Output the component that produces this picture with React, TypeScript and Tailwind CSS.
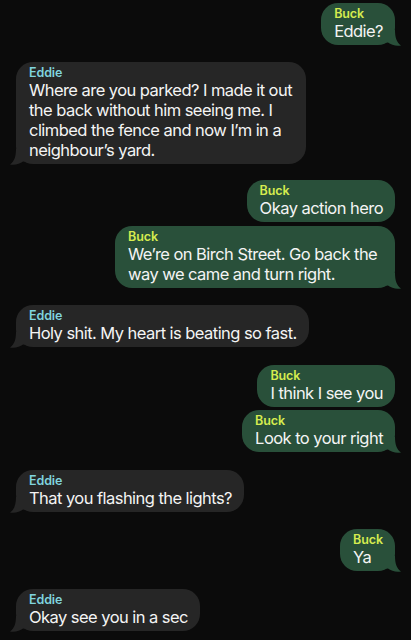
import React from "react";

type Msg = {
  from: "Buck" | "Eddie";
  text: string;
  width?: string;
};

const messages: Msg[] = [
  { from: "Buck", text: "Eddie?" },
  {
    from: "Eddie",
    text: "Where are you parked? I made it out the back without him seeing me. I climbed the fence and now I\u2019m in a neighbour\u2019s yard.",
    width: "w-[290px]",
  },
  { from: "Buck", text: "Okay action hero" },
  {
    from: "Buck",
    text: "We\u2019re on Birch Street. Go back the way we came and turn right.",
    width: "w-[280px]",
  },
  { from: "Eddie", text: "Holy shit. My heart is beating so fast." },
  { from: "Buck", text: "I think I see you" },
  { from: "Buck", text: "Look to your right" },
  { from: "Eddie", text: "That you flashing the lights?" },
  { from: "Buck", text: "Ya" },
  { from: "Eddie", text: "Okay see you in a sec" },
];

function Tail({ side, color }: { side: "left" | "right"; color: string }) {
  return (
    <svg
      width="16"
      height="16"
      viewBox="0 0 16 16"
      className={
        side === "right"
          ? "absolute -right-[6px] -bottom-[1px]"
          : "absolute -left-[6px] -bottom-[1px] -scale-x-100"
      }
    >
      <path d="M0 0 H10 C10 7 11.5 12.5 16 15.5 C11 16.3 6 15 3 12.5 H0 Z" fill={color} />
    </svg>
  );
}

function Bubble({ msg, last }: { msg: Msg; last: boolean }) {
  const mine = msg.from === "Buck";
  const color = mine ? "#29503a" : "#262626";
  return (
    <div
      className={`relative rounded-[17px] pl-[13px] pr-3 pt-[4px] pb-[4px] ${
        mine ? "self-end bg-[#29503a]" : "self-start bg-[#262626]"
      } ${msg.width ?? "w-fit max-w-[300px]"}`}
    >
      <div
        className={`text-[12.5px] leading-[14px] font-semibold tracking-[-0.1px] ${
          mine ? "text-[#d6ec4f]" : "text-[#80d4de]"
        }`}
      >
        {msg.from}
      </div>
      <div className="text-[16.5px] leading-[20px] tracking-[-0.55px] text-[#f4f4f4]">
        {msg.text}
      </div>
      {last && <Tail side={mine ? "right" : "left"} color={color} />}
    </div>
  );
}

export default function App() {
  return (
    <div
      className="min-h-[640px] w-[411px] bg-[#0b0b0b] px-4 pt-[3px] flex flex-col"
      style={{ fontFamily: "Inter, 'Noto Sans', sans-serif" }}
    >
      {messages.map((m, i) => {
        const prev = messages[i - 1];
        const next = messages[i + 1];
        const same = prev && prev.from === m.from;
        const last = !next || next.from !== m.from;
        return (
          <div
            key={i}
            className={`flex flex-col ${
              i === 0 ? "" : same ? "mt-[3.5px]" : i < 3 ? "mt-[16.5px]" : "mt-[17.5px]"
            }`}
          >
            <Bubble msg={m} last={last} />
          </div>
        );
      })}
    </div>
  );
}
